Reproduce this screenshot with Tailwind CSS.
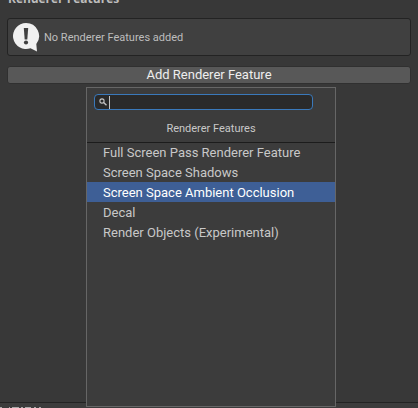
<!DOCTYPE html>
<html lang="en">
<head>
<meta charset="utf-8">
<meta name="viewport" content="width=device-width, initial-scale=1">
<title>Renderer Features</title>
<script src="https://cdn.jsdelivr.net/npm/@tailwindcss/browser@4"></script>
</head>
<body class="bg-[#383838] font-['Roboto','Open_Sans',sans-serif] text-[#c8c8c8]">
<div class="relative flex h-screen flex-col overflow-hidden">
  <main class="flex flex-1 flex-col px-[7px]">
    <h2 class="-mt-[9px] h-[27px] pl-px font-['Open_Sans',sans-serif] text-[12px] leading-4 font-bold text-[#bdbdbd]">Renderer Features</h2>
    <div class="flex h-[38px] shrink-0 items-center rounded-[3px] border border-[#232323] bg-[#404040] pl-1 text-[11px] text-[#bdbdbd]">
      <svg class="size-8 shrink-0" viewBox="0 0 32 32" aria-hidden="true">
        <path fill="#f0f0f0" d="M14 2a13 13 0 1 0 4.500 25.200L25 30.500 24.300 23A13 13 0 0 0 14 2z"/>
        <path fill="#404040" d="M11.800 7h4.400l-.9 11.500h-2.600z"/>
        <circle cx="14" cy="21.500" r="2.100" fill="#404040"/>
      </svg>
      <p class="pt-[2px]">No Renderer Features added</p>
    </div>
    <button type="button" class="mt-[10px] h-[18px] shrink-0 rounded-[3px] border border-[#303030] bg-[#585858] text-[13px] leading-4 text-[#eeeeee]">Add Renderer Feature</button>
  </main>
  <footer class="flex h-[6px] shrink-0 items-end border-t border-[#232323] bg-[#3c3c3c]">
    <svg class="h-px w-[42px]" viewBox="0 0 42 1" aria-hidden="true" fill="none" stroke="#a8a8a8">
      <path d="M0 .5h2M9 .5h1M12 .5h7M21 .5h2M25 .5h6M34 .5h2M39 .5h2"/>
    </svg>
  </footer>

  <section class="absolute top-[87px] bottom-[1px] left-[86px] flex w-[250px] flex-col border border-[#666666] bg-[#3c3c3c]" aria-label="Renderer Features">
    <label class="mt-[6px] mr-[22px] ml-[7px] flex h-4 items-center gap-[2px] rounded-[4px] border border-[#3a79bb] bg-[#2a2a2a] pl-1">
      <svg class="size-2 shrink-0" viewBox="0 0 8 8" fill="none" stroke="#c4c4c4" aria-hidden="true">
        <circle cx="3" cy="3" r="2.100" stroke-width="1.100"/>
        <path d="M4.600 4.600 7.500 7.300" stroke-width="1.400"/>
      </svg>
      <span class="h-[13px] w-px shrink-0 bg-[#c4c4c4]"></span>
      <input type="text" aria-label="Search" class="w-full min-w-0 bg-transparent text-[11px] outline-none">
    </label>
    <h3 class="mt-[6px] h-[27px] border-b border-[#1c1c1c] text-center text-[11px] leading-[26px]">Renderer Features</h3>
    <ul class="-mt-px text-[13px] leading-[22px]">
      <li><button type="button" class="block h-5 w-full pl-4 text-left">Full Screen Pass Renderer Feature</button></li>
      <li><button type="button" class="block h-5 w-full pl-4 text-left">Screen Space Shadows</button></li>
      <li><button type="button" class="block h-5 w-full bg-[#3e5f96] pl-4 text-left text-white">Screen Space Ambient Occlusion</button></li>
      <li><button type="button" class="block h-5 w-full pl-4 text-left">Decal</button></li>
      <li><button type="button" class="block h-5 w-full pl-4 text-left">Render Objects (Experimental)</button></li>
    </ul>
  </section>
</div>
</body>
</html>
